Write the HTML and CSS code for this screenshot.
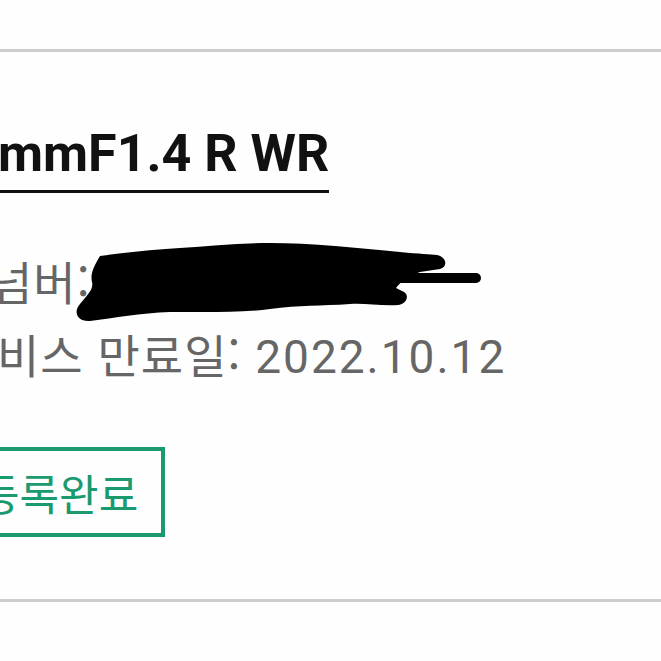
FILE: index.html
```html
<!DOCTYPE html>
<html lang="ko">
<head>
    <meta charset="UTF-8">
    <meta name="viewport" content="width=device-width, initial-scale=1.0">
    <title>제품 정보</title>
    <link rel="stylesheet" href="styles.css">
</head>
<body>

<div class="card">
    <div class="product">
        <span class="product-name">mmF1.4 R WR</span>
    </div>

    <div class="info">
        <div class="info-row serial">넘버:</div>
        <div class="info-row expire">비스 만료일: <span class="date">2022.10.12</span></div>
    </div>

    <div class="status">
        <span class="status-box">등록완료</span>
    </div>

    <!-- 시리얼 번호 가림 -->
    <svg class="scribble" width="420" height="90" viewBox="70 235 420 90">
        <path d="M100 256 C130 252 150 250 180 248 C210 246 240 243 270 243 C310 243 360 248 400 252 C420 254 430 254 437 255 C447 257 448 267 440 269 L420 272 C410 276 400 282 396 288 L404 292 C410 296 406 304 398 305 C380 306 365 303 350 304 C320 306 300 305 270 309 C240 313 200 312 170 312 C140 313 115 318 90 321 C77 322 73 312 80 304 C86 296 94 290 92 282 C90 274 94 266 100 256 Z" fill="#000"/>
        <path d="M300 278 L476 278" stroke="#000" stroke-width="10" stroke-linecap="round"/>
    </svg>
</div>

</body>
</html>
```

FILE: styles.css
```css
body {
    margin: 0;
    padding: 49px 0 0 0;
    background-color: #fefefe;
    font-family: "Noto Sans CJK KR", "Noto Sans", sans-serif;
}

.card {
    position: relative;
    height: 547px;
    border-top: 3px solid #cdcdcd;
    border-bottom: 3px solid #cdcdcd;
    overflow: hidden;
}

.product {
    padding-top: 74px;
}

.product-name {
    display: inline-block;
    margin-left: -2px;
    font-family: Roboto, "Noto Sans", sans-serif;
    font-weight: 700;
    font-size: 52px;
    line-height: 56px;
    color: #111;
    padding-bottom: 8px;
    border-bottom: 3px solid #111;
}

.info {
    margin-top: 49px;
    color: #666;
}

.info-row {
    font-size: 46px;
    line-height: 76px;
    letter-spacing: 1px;
    white-space: nowrap;
}

.serial {
    margin-left: -10px;
}

.expire {
    margin-left: -3px;
    margin-top: -3px;
}

.date {
    font-family: Roboto, sans-serif;
    letter-spacing: 2px;
}

.status {
    margin-top: 52px;
}

.status-box {
    display: inline-block;
    margin-left: -24px;
    padding: 9px 23px 9px 0;
    border: 4px solid #1b9a6e;
    color: #1b9a6e;
    font-size: 43px;
    line-height: 64px;
}

.scribble {
    position: absolute;
    left: 70px;
    top: 183px;
}
```
